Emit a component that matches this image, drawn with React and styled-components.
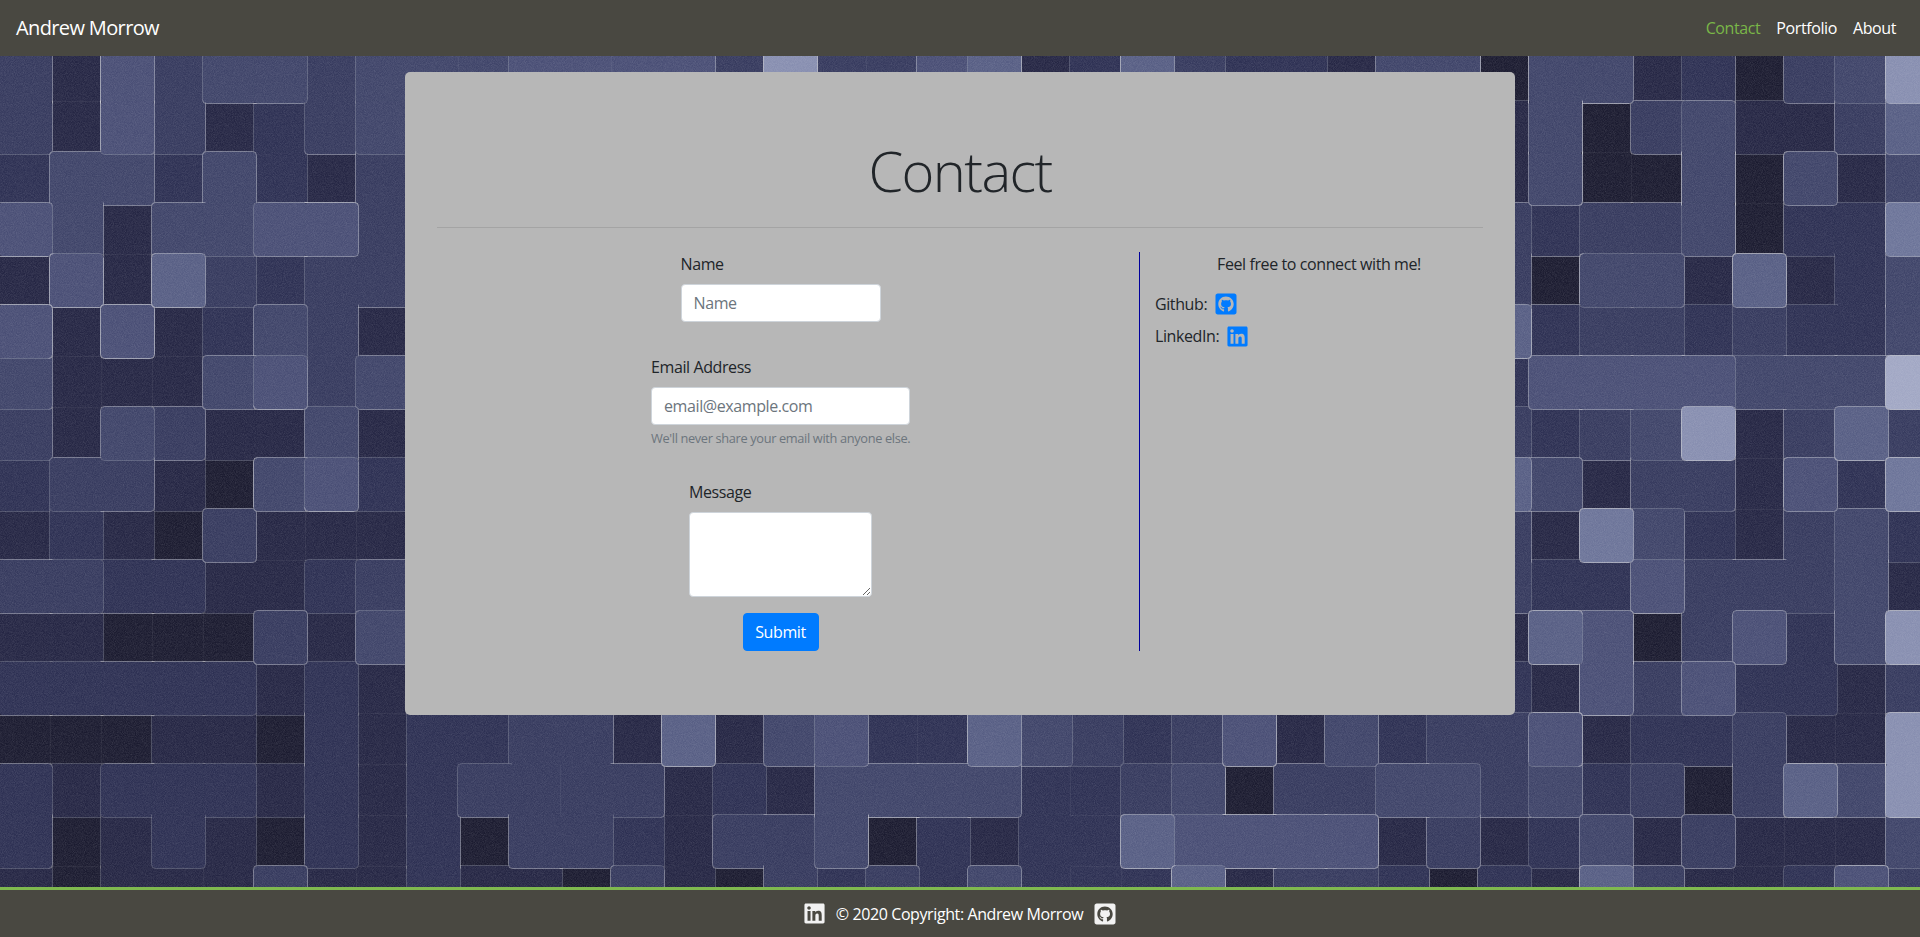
import React from "react";
import styled, { createGlobalStyle } from "styled-components";
import { FaGithubSquare, FaLinkedin } from "react-icons/fa";

// tile wall behind the page, one digit per 51px tile, '.' is hidden by the card
const MID = ".....................";
const TILE_ROWS = [
  "33333333" + MID + "333333333",
  "31534434" + "445555383356126322144" + "044120348",
  "31531234" + MID + "140341136",
  "24424213" + MID + "140040414",
  "54144553" + MID + "323340227",
  "15163233" + MID + "304416124",
  "51512431" + MID + "623323224",
  "41114534" + MID + "255554449",
  "31431141" + MID + "323481363",
  "23310452" + MID + "641331527",
  "12103111" + MID + "317421342",
  "33221123" + MID + "322533341",
  "11000314" + MID + "165035248",
  "22222121" + MID + "215352213",
  "00011021" + "223316145226432351423" + "351223118",
  "21222121" + "233331214444223403344" + "342303648",
  "20121021" + "203321334021226555513" + "124131114",
  "10111311" + "211031032324222613320" + "216311253",
];
const TILE_COLORS = ["#1b1b30", "#252644", "#2d3053", "#363a5e", "#3f4469", "#494e75", "#575e84", "#6c7499", "#878eb0", "#a1a7c4"];
const PITCH = 51;

const levelAt = (r, c) => {
  const ch = TILE_ROWS[r] && TILE_ROWS[r][c];
  return ch === undefined || ch === "." ? null : Number(ch);
};

const buildTiles = () => {
  const cells = [];
  TILE_ROWS.forEach((row, r) => {
    [...row].forEach((ch, c) => {
      if (ch !== ".") cells.push({ r, c, level: Number(ch) });
    });
  });
  cells.sort((a, b) => a.level - b.level);

  let out = "";
  cells.forEach(({ r, c, level }) => {
    const x = c * PITCH;
    const y = r * PITCH;
    const neighbours = [levelAt(r - 1, c), levelAt(r, c + 1), levelAt(r + 1, c), levelAt(r, c - 1)];
    const grow = neighbours.some((n) => n !== null && n < level) ? 1.5 : 0;
    out += `<rect x="${x - grow}" y="${y - grow}" width="${PITCH + grow * 2}" height="${PITCH + grow * 2}" rx="${grow ? 5 : 0}" fill="${TILE_COLORS[level]}"/>`;

    const corners = [
      [x - grow, y - grow],
      [x + PITCH + grow, y - grow],
      [x + PITCH + grow, y + PITCH + grow],
      [x - grow, y + PITCH + grow],
    ];
    const drawn = neighbours.map((n) => n !== null && n < level);
    drawn.forEach((on, i) => {
      const from = corners[i];
      const to = corners[(i + 1) % 4];
      const diff = level - neighbours[i];
      if (!on) {
        if (neighbours[i] === level && (i === 1 || i === 2)) {
          out += `<path d="M${from[0]} ${from[1]}L${to[0]} ${to[1]}" stroke="#fff" stroke-opacity=".1" fill="none"/>`;
        }
        return;
      }
      const ux = Math.sign(to[0] - from[0]);
      const uy = Math.sign(to[1] - from[1]);
      const rad = 4;
      const prevOn = drawn[(i + 3) % 4];
      const nextOn = drawn[(i + 1) % 4];
      const sx = from[0] + (prevOn ? ux * rad : 0);
      const sy = from[1] + (prevOn ? uy * rad : 0);
      const ex = to[0] - (nextOn ? ux * rad : 0);
      const ey = to[1] - (nextOn ? uy * rad : 0);
      let d = `M${sx} ${sy}L${ex} ${ey}`;
      if (nextOn) {
        const nextTo = corners[(i + 2) % 4];
        const vx = Math.sign(nextTo[0] - to[0]);
        const vy = Math.sign(nextTo[1] - to[1]);
        d += `Q${to[0]} ${to[1]} ${to[0] + vx * rad} ${to[1] + vy * rad}`;
      }
      const alpha = diff >= 4 ? 0.62 : diff >= 2 ? 0.42 : 0.22;
      out += `<path d="${d}" stroke="#dcdde4" stroke-opacity="${alpha}" fill="none"/>`;
    });
  });

  const noise = `<filter id="n" x="0" y="0" width="100%" height="100%"><feTurbulence type="fractalNoise" baseFrequency="1.1" numOctaves="2" seed="4"/><feColorMatrix values="0 0 0 0 1 0 0 0 0 1 0 0 0 0 1 .9 .9 0 0 -.62"/></filter>`;
  const svg = `<svg xmlns="http://www.w3.org/2000/svg" width="1920" height="937"><defs>${noise}</defs>${out}<rect width="1920" height="937" filter="url(#n)" opacity=".15"/></svg>`;
  return `data:image/svg+xml,${encodeURIComponent(svg)}`;
};

const tileImage = buildTiles();

const GlobalStyle = createGlobalStyle`
  * {
    box-sizing: border-box;
  }
  body {
    margin: 0;
    font-family: "Open Sans", "Noto Sans", sans-serif;
    font-size: 16px;
    line-height: 1.5;
    color: #212529;
  }
`;

const Page = styled.div`
  min-height: 100vh;
  display: flex;
  flex-direction: column;
  background: #2d3053 url("${tileImage}") 0 0 no-repeat;
`;

const Navbar = styled.nav`
  height: 56px;
  flex-shrink: 0;
  padding: 0 16px;
  display: flex;
  align-items: center;
  justify-content: space-between;
  background: #494841;
`;

const Brand = styled.a`
  font-size: 20px;
  letter-spacing: -0.63px;
  color: #fff;
`;

const NavLinks = styled.div`
  display: flex;
`;

const NavLink = styled.a`
  padding: 0 8px;
  letter-spacing: -0.4px;
  color: ${(props) => (props.$active ? "#7ab648" : "#fff")};
`;

const Main = styled.main`
  flex: 1;
  padding-top: 16px;
`;

const Card = styled.section`
  width: 1110px;
  margin: 0 auto;
  padding: 64px 32px;
  border-radius: 5px;
  background: #b7b7b7;
`;

const Title = styled.h1`
  margin: 0;
  padding-top: 1px;
  font-size: 56px;
  font-weight: 300;
  line-height: 1.2;
  letter-spacing: -1.6px;
  text-align: center;
  color: #212529;
`;

const Divider = styled.hr`
  margin: 23px 0 24px;
  border: 0;
  border-top: 1px solid rgba(0, 0, 0, 0.1);
`;

const Columns = styled.div`
  margin: 0 -15px;
  display: grid;
  grid-template-columns: 718px 1fr;
`;

const FormCol = styled.form`
  padding: 0 15px;
  display: flex;
  flex-direction: column;
  align-items: center;
  border-right: 1px solid #00009c;
`;

const Group = styled.div`
  width: ${(props) => props.$width}px;
  margin-bottom: ${(props) => props.$gap}px;
`;

const Label = styled.label`
  display: block;
  margin-bottom: 8px;
  letter-spacing: -0.4px;
`;

const Input = styled.input`
  display: block;
  width: 100%;
  height: 38px;
  padding: 6px 12px;
  border: 1px solid #ced4da;
  border-radius: 4px;
  background: #fff;
  font: inherit;
  letter-spacing: -0.4px;
  color: #495057;

  &::placeholder {
    color: #6c757d;
    opacity: 1;
  }
`;

const TextArea = styled.textarea`
  display: block;
  width: 100%;
  height: 85px;
  padding: 6px 12px;
  border: 1px solid #ced4da;
  border-radius: 4px;
  background: #fff;
  font: inherit;
`;

const Hint = styled.small`
  display: block;
  margin-top: 4px;
  font-size: 12.8px;
  letter-spacing: -0.35px;
  white-space: nowrap;
  color: #6c757d;
`;

const Submit = styled.button`
  width: 76px;
  height: 38px;
  padding: 0;
  border: 1px solid #007bff;
  border-radius: 4px;
  background: #007bff;
  font: inherit;
  letter-spacing: -0.4px;
  color: #fff;
`;

const SideCol = styled.aside`
  padding: 0 15px;
`;

const SideIntro = styled.p`
  margin: 0 0 16px;
  letter-spacing: -0.4px;
  text-align: center;
`;

const SocialRow = styled.div`
  height: 24px;
  margin-bottom: 8px;
  display: flex;
  align-items: center;
  gap: 7px;
  letter-spacing: -0.4px;
`;

const IconLink = styled.a`
  display: flex;
  color: ${(props) => props.$color};
`;

const Footer = styled.footer`
  height: 50px;
  flex-shrink: 0;
  display: flex;
  align-items: center;
  justify-content: center;
  gap: 10px;
  border-top: 3px solid #7fb94f;
  background: #494841;
  letter-spacing: -0.4px;
  color: #fff;
`;

const App = () => {
  return (
    <Page>
      <GlobalStyle />
      <Navbar>
        <Brand>Andrew Morrow</Brand>
        <NavLinks>
          <NavLink $active>Contact</NavLink>
          <NavLink>Portfolio</NavLink>
          <NavLink>About</NavLink>
        </NavLinks>
      </Navbar>

      <Main>
        <Card>
          <Title>Contact</Title>
          <Divider />
          <Columns>
            <FormCol>
              <Group $width={200} $gap={33}>
                <Label>Name</Label>
                <Input type="text" placeholder="Name" />
              </Group>
              <Group $width={259} $gap={32}>
                <Label>Email Address</Label>
                <Input type="email" placeholder="email@example.com" />
                <Hint>We'll never share your email with anyone else.</Hint>
              </Group>
              <Group $width={183} $gap={16}>
                <Label>Message</Label>
                <TextArea />
              </Group>
              <Submit type="button">Submit</Submit>
            </FormCol>

            <SideCol>
              <SideIntro>Feel free to connect with me!</SideIntro>
              <SocialRow>
                Github:
                <IconLink $color="#007bff">
                  <FaGithubSquare size={24} />
                </IconLink>
              </SocialRow>
              <SocialRow>
                LinkedIn:
                <IconLink $color="#007bff">
                  <FaLinkedin size={23} />
                </IconLink>
              </SocialRow>
            </SideCol>
          </Columns>
        </Card>
      </Main>

      <Footer>
        <IconLink $color="#f2f2f2">
          <FaLinkedin size={23} />
        </IconLink>
        © 2020 Copyright: Andrew Morrow
        <IconLink $color="#f2f2f2">
          <FaGithubSquare size={24} />
        </IconLink>
      </Footer>
    </Page>
  );
};

export default App;
